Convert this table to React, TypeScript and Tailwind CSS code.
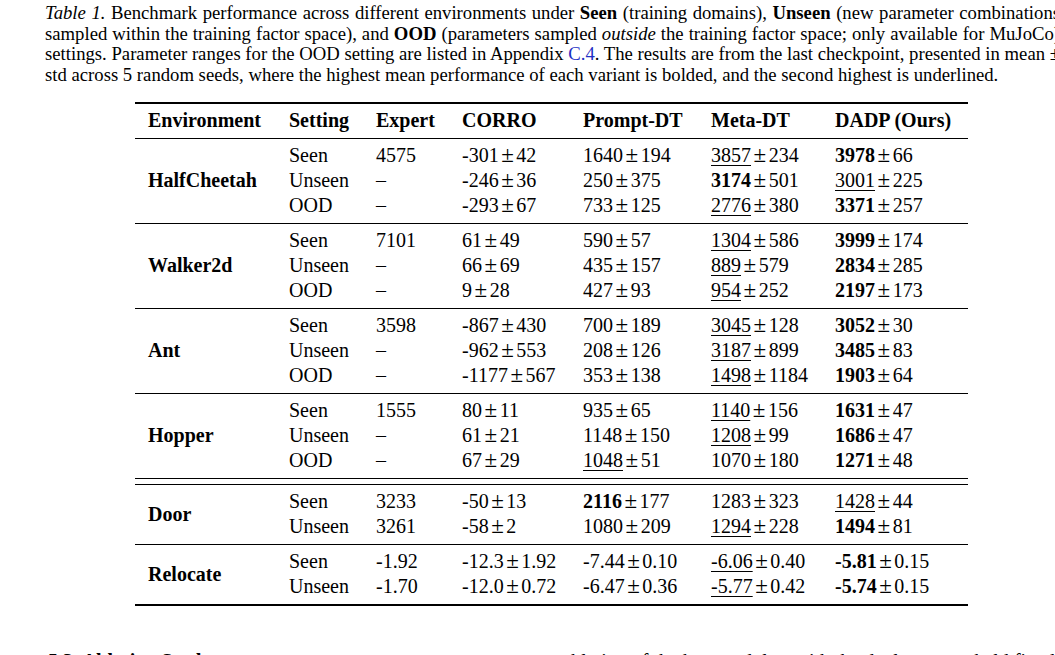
import React from 'react';

type Row = [string, string, string, string, string, string];

type Group = {
  env: string;
  rows: Row[];
};

// cell marks: "*" = bold mean, "_" = underlined mean
const groups: Group[] = [
  {
    env: 'HalfCheetah',
    rows: [
      ['Seen', '4575', '-301±42', '1640±194', '_3857±234', '*3978±66'],
      ['Unseen', '–', '-246±36', '250±375', '*3174±501', '_3001±225'],
      ['OOD', '–', '-293±67', '733±125', '_2776±380', '*3371±257'],
    ],
  },
  {
    env: 'Walker2d',
    rows: [
      ['Seen', '7101', '61±49', '590±57', '_1304±586', '*3999±174'],
      ['Unseen', '–', '66±69', '435±157', '_889±579', '*2834±285'],
      ['OOD', '–', '9±28', '427±93', '_954±252', '*2197±173'],
    ],
  },
  {
    env: 'Ant',
    rows: [
      ['Seen', '3598', '-867±430', '700±189', '_3045±128', '*3052±30'],
      ['Unseen', '–', '-962±553', '208±126', '_3187±899', '*3485±83'],
      ['OOD', '–', '-1177±567', '353±138', '_1498±1184', '*1903±64'],
    ],
  },
  {
    env: 'Hopper',
    rows: [
      ['Seen', '1555', '80±11', '935±65', '_1140±156', '*1631±47'],
      ['Unseen', '–', '61±21', '1148±150', '_1208±99', '*1686±47'],
      ['OOD', '–', '67±29', '_1048±51', '1070±180', '*1271±48'],
    ],
  },
];

const adroit: Group[] = [
  {
    env: 'Door',
    rows: [
      ['Seen', '3233', '-50±13', '*2116±177', '1283±323', '_1428±44'],
      ['Unseen', '3261', '-58±2', '1080±209', '_1294±228', '*1494±81'],
    ],
  },
  {
    env: 'Relocate',
    rows: [
      ['Seen', '-1.92', '-12.3±1.92', '-7.44±0.10', '_-6.06±0.40', '*-5.81±0.15'],
      ['Unseen', '-1.70', '-12.0±0.72', '-6.47±0.36', '_-5.77±0.42', '*-5.74±0.15'],
    ],
  },
];

// math-style plus-minus: a touch larger than the text, with thin spacing
const Pm = () => <span className="mx-[2.5px] text-[23px] leading-none">±</span>;

const Cell = ({ v }: { v: string }) => {
  const mark = v[0];
  if (!v.includes('±')) return <span>{v}</span>;
  const plain = mark !== '*' && mark !== '_';
  const [mean, std] = (plain ? v : v.slice(1)).split('±');
  return (
    <span>
      {plain ? (
        mean
      ) : mark === '*' ? (
        <span className="font-bold">{mean}</span>
      ) : (
        <span className="underline decoration-[1px] underline-offset-[3px]">{mean}</span>
      )}
      <Pm />
      {std}
    </span>
  );
};

const EnvGroup = ({ group }: { group: Group }) => (
  <div className="flex pt-[4px] pb-[5px]">
    <div className="w-[154px] pl-[13px] flex items-center font-bold">{group.env}</div>
    <div>
      {group.rows.map((row, i) => (
        <div key={i} className="grid grid-cols-[87px_86px_121px_128px_124px_133px] h-[25px] leading-[25px]">
          {row.map((v, j) => (
            <div key={j} className="whitespace-nowrap">
              <Cell v={v} />
            </div>
          ))}
        </div>
      ))}
    </div>
  </div>
);

const Rule = () => <div className="h-[1px] bg-black" />;

export default function App() {
  return (
    <div className="w-[1055px] h-[655px] overflow-hidden bg-white text-black font-['Liberation_Serif','Times_New_Roman',serif]">
      {/* Caption */}
      <div className="pl-[45px] pt-[3px] text-[18.7px] leading-[20.5px]">
        <div className="w-[1015px] whitespace-nowrap text-justify [text-align-last:justify]">
          <i>Table 1.</i> Benchmark performance across different environments under <b>Seen</b> (training domains),{' '}
          <b>Unseen</b> (new parameter combinations
        </div>
        <div className="w-[1015px] whitespace-nowrap text-justify [text-align-last:justify]">
          sampled within the training factor space), and <b>OOD</b> (parameters sampled <i>outside</i> the training
          factor space; only available for MuJoCo)
        </div>
        <div className="w-[1015px] whitespace-nowrap text-justify [text-align-last:justify]">
          settings. Parameter ranges for the OOD setting are listed in Appendix <span className="text-[#1f2fc4]">C.4</span>.
          The results are from the last checkpoint, presented in mean ±
        </div>
        <div className="whitespace-nowrap">
          std across 5 random seeds, where the highest mean performance of each variant is bolded, and the second
          highest is underlined.
        </div>
      </div>

      {/* Table */}
      <div className="ml-[135px] mt-[17px] w-[833px] text-[20px]">
        <div className="h-[1.5px] bg-black" />
        <div className="grid grid-cols-[154px_87px_86px_121px_128px_124px_133px] h-[34px] items-center font-bold pb-[1px]">
          <div className="pl-[13px]">Environment</div>
          <div>Setting</div>
          <div>Expert</div>
          <div>CORRO</div>
          <div>Prompt-DT</div>
          <div>Meta-DT</div>
          <div>DADP (Ours)</div>
        </div>
        <Rule />
        {groups.map((g, i) => (
          <React.Fragment key={g.env}>
            <EnvGroup group={g} />
            {i < groups.length - 1 && <Rule />}
          </React.Fragment>
        ))}
        <Rule />
        <div className="h-[5px]" />
        <Rule />
        <EnvGroup group={adroit[0]} />
        <Rule />
        <EnvGroup group={adroit[1]} />
        <div className="h-[2px] bg-black" />
      </div>

      {/* Next section, cut by the window edge */}
      <div className="flex mt-[43px] text-[20px] leading-[24px] whitespace-nowrap">
        <div className="w-[605px] pl-[48px] font-bold">5.3. Ablation Study</div>
        <div>ablation of the key modules, with the dual prompts held fixed</div>
      </div>
    </div>
  );
}
